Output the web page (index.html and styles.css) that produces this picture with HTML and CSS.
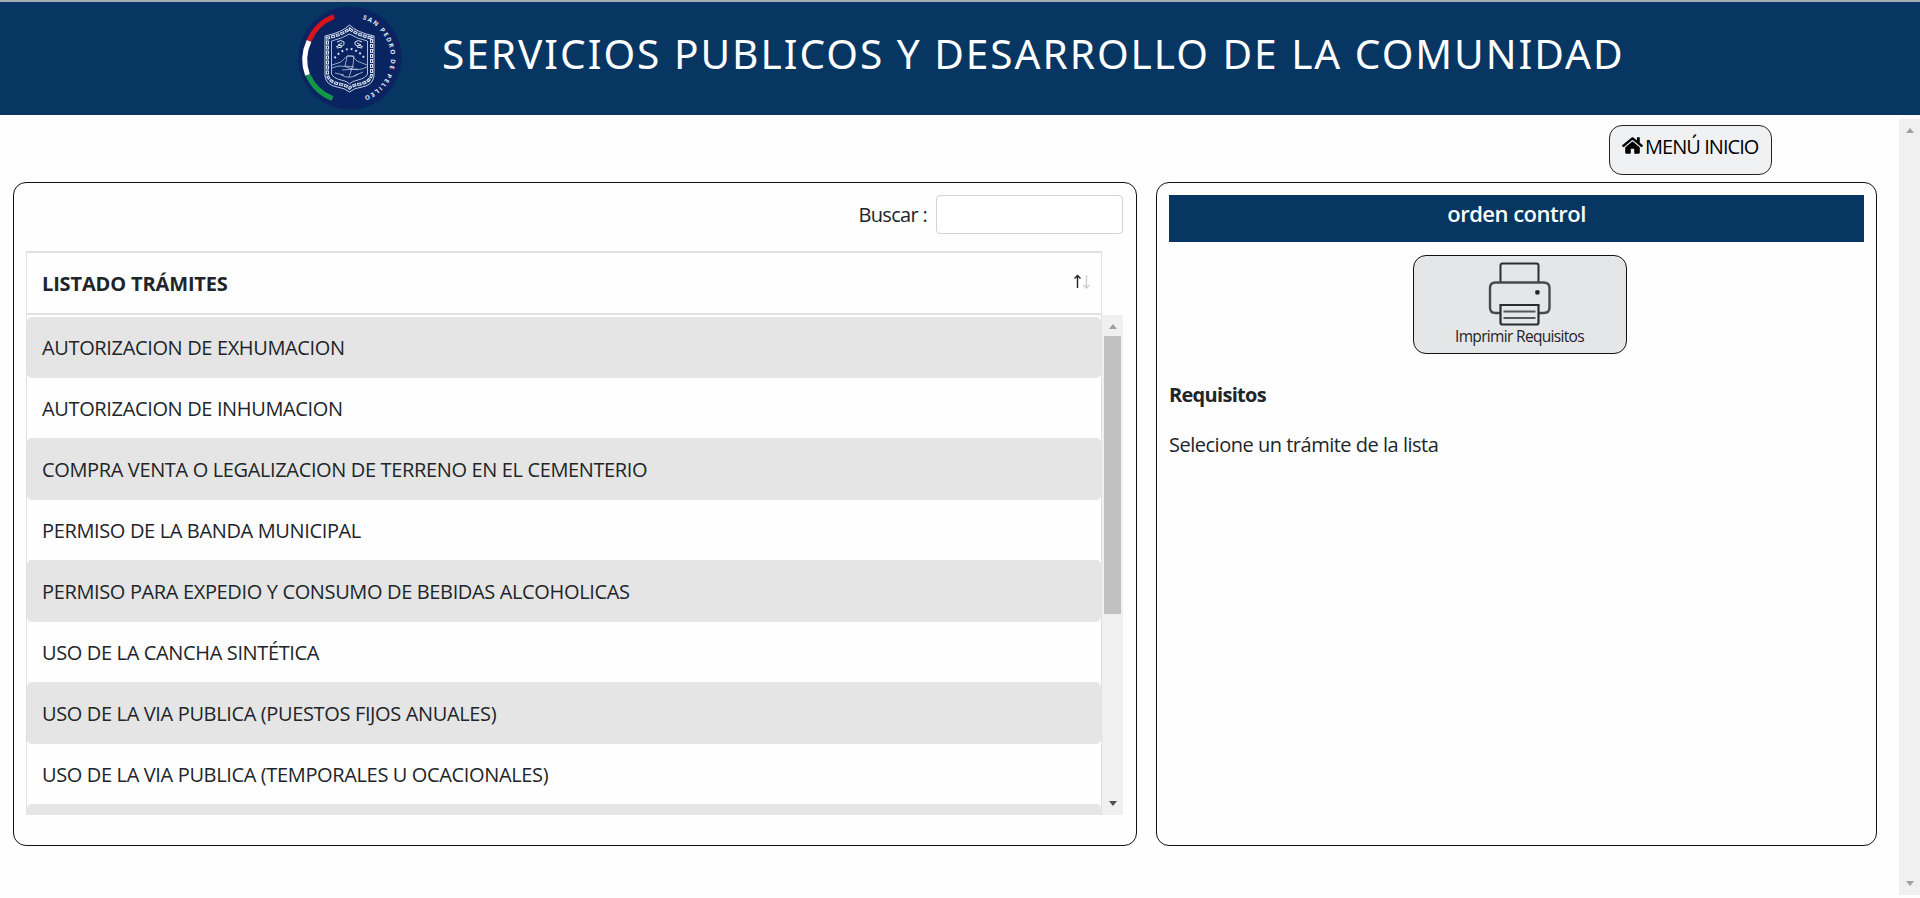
FILE: index.html
```html
<!DOCTYPE html>
<html lang="es">
<head>
<meta charset="utf-8">
<title>Servicios Publicos y Desarrollo de la Comunidad</title>
<link rel="stylesheet" href="styles.css">
</head>
<body>
<header class="header">
  <svg class="logo" viewBox="0 0 104 104">
    <defs><path id="ring" d="M64.6 13A41 41 0 0 1 64.6 91"/></defs>
    <circle cx="52" cy="52" r="51.5" fill="#0a2461"/>
    <g fill="none" stroke-width="5">
      <path d="M36 10.5A44.5 44.5 0 0 0 11 35" stroke="#d8131b"/>
      <path d="M11 35A44.5 44.5 0 0 0 9.500 69" stroke="#fff"/>
      <path d="M10 69A44.500 44.500 0 0 0 34.500 92.500" stroke="#119748"/>
    </g>
    <text class="ring-text"><textPath href="#ring" textLength="101">SAN PEDRO DE PELILEO</textPath></text>
    <g fill="none" stroke="#d9e3f2">
      <path d="M51.500 19Q59 26.500 76 30V70Q75 79 64 81Q56 82 51.500 86Q47 82 39 81Q28 79 27 70V30Q44 26.500 51.500 19Z" stroke-width=".9"/>
      <path d="M51.500 23Q60 29 73.500 32V69Q72 76 62 78Q55 79 51.500 82Q48 79 41 78Q31 76 29.500 69V32Q43 29 51.500 23Z" stroke-width="3" stroke-dasharray="4 1"/>
      <path d="M51.500 23Q60 29 73.500 32V69Q72 76 62 78Q55 79 51.500 82Q48 79 41 78Q31 76 29.500 69V32Q43 29 51.500 23Z" stroke="#0a2461" stroke-width="1" stroke-dasharray="2 3" stroke-dashoffset="-1"/>
      <path d="M51.500 28Q59 32.500 69.500 35V68Q68 72 60 74Q54 75 51.500 78Q49 75 43 74Q35 72 33.500 68V35Q44 32.500 51.500 28Z" stroke-width=".8"/>
      <path d="M39 36q4-3 7 0q1 3-2 4l-4-1 4-2M64 36q-4-3-7 0q-1 3 2 4l4-1-4-2M38 41l4-2 2 2-5 1M65 41l-4-2-2 2 5 1" stroke-width="1"/>
      <path d="M36.500 52Q51.500 34 66.500 52" stroke-width="2" stroke-dasharray="1.800 3"/>
      <path d="M34 59l9-3 6-6h5l5 5 10 4M34 62q9-4 17 0t18-1M49 50h7l-1 9-4 12M44 64l16-1M43 69q9 5 17-1M49 51l-2 9 9 1M37 67l9 2M56 70l9-4" stroke-width=".8" opacity=".85"/>
    </g>
  </svg>
  <h1 class="title">SERVICIOS PUBLICOS Y DESARROLLO DE LA COMUNIDAD</h1>
</header>
<div class="viewport">
  <main class="content">
    <nav class="toolbar">
      <a class="home-button">
        <svg class="home-icon" viewBox="0 0 576 512"><path d="M488 312.700V456c0 13.300-10.700 24-24 24H348c-6.600 0-12-5.400-12-12V356c0-6.600-5.400-12-12-12h-72c-6.600 0-12 5.400-12 12v112c0 6.600-5.400 12-12 12H112c-13.300 0-24-10.700-24-24V312.700c0-3.600 1.600-7 4.400-9.300l188-154.800c4.400-3.600 10.800-3.600 15.300 0l188 154.800c2.700 2.300 4.300 5.700 4.300 9.300zm83.600-60.900L488 182.900V44.400c0-6.600-5.400-12-12-12h-56c-6.600 0-12 5.400-12 12V117l-89.500-73.700c-17.700-14.600-43.300-14.600-61 0L4.400 251.800c-5.100 4.200-5.800 11.800-1.600 16.900l25.500 31c4.200 5.100 11.800 5.800 16.900 1.600l235.200-193.700c4.400-3.600 10.800-3.600 15.300 0l235.200 193.700c5.100 4.200 12.700 3.500 16.900-1.600l25.500-31c4.200-5.200 3.400-12.700-1.700-16.900z"/></svg>
        <span class="home-label">MENÚ INICIO</span>
      </a>
    </nav>
    <div class="columns">
      <section class="card list-card">
        <div class="search">
          <label class="search-label" for="q">Buscar :</label>
          <input class="search-input" id="q" type="text">
        </div>
        <div class="table-head">
          <span class="table-title">LISTADO TRÁMITES</span>
          <svg class="sort" viewBox="0 0 18 16" fill="none"><path d="M4.500 14V2M1.500 4.500l3-3 3 3" stroke="#222" stroke-width="1.400"/><path d="M13.500 1v12M10.500 11l3 3 3-3" stroke="#ccc" stroke-width="1.300"/></svg>
        </div>
        <div class="table-scroll">
          <ul class="rows">
            <li class="row">AUTORIZACION DE EXHUMACION</li>
            <li class="row">AUTORIZACION DE INHUMACION</li>
            <li class="row">COMPRA VENTA O LEGALIZACION DE TERRENO EN EL CEMENTERIO</li>
            <li class="row">PERMISO DE LA BANDA MUNICIPAL</li>
            <li class="row">PERMISO PARA EXPEDIO Y CONSUMO DE BEBIDAS ALCOHOLICAS</li>
            <li class="row">USO DE LA CANCHA SINTÉTICA</li>
            <li class="row">USO DE LA VIA PUBLICA (PUESTOS FIJOS ANUALES)</li>
            <li class="row">USO DE LA VIA PUBLICA (TEMPORALES U OCACIONALES)</li>
            <li class="row"></li>
          </ul>
          <div class="bar">
            <i class="arrow up"></i>
            <i class="thumb"></i>
            <i class="arrow down dark"></i>
          </div>
        </div>
      </section>
      <section class="card detail-card">
        <h2 class="detail-title">orden control</h2>
        <button class="print-button">
          <svg class="printer" viewBox="0 0 64 64" fill="none" stroke="#2b2c2e" stroke-width="2">
            <path d="M12.500 20V3.500q0-2 2-2h34q2 0 2 2V20"/>
            <path d="M12.500 51H7.500Q2 51 2 45.500V26Q2 20.500 7.500 20.500h48Q61.500 20.500 61.500 26v19.500q0 5.500-6 5.500H50.500" stroke="#48494b" stroke-width="2.400"/>
            <path d="M12.500 43h38v17.500q0 2-2 2h-34q-2 0-2-2Z" stroke-width="2.200"/>
            <path d="M15.500 49.500h32M15.500 56h32" stroke="#55575a" stroke-width="2.200"/>
            <rect x="47.300" y="28.300" width="4.200" height="4.200" rx="1" fill="#222" stroke="none"/>
          </svg>
          <span class="print-label">Imprimir Requisitos</span>
        </button>
        <h3 class="req-title">Requisitos</h3>
        <p class="req-text">Selecione un trámite de la lista</p>
      </section>
    </div>
  </main>
  <div class="bar page-bar">
    <i class="arrow up"></i>
    <i class="arrow down"></i>
  </div>
</div>
</body>
</html>
```

FILE: styles.css
```css
* { box-sizing: border-box; }
body {
  margin: 0;
  height: 898px;
  overflow: hidden;
  background: #fefefe;
  color: #212529;
  font: 20px/30px "Open Sans", "Noto Sans", sans-serif;
}
h1, h2, h3, p, ul { margin: 0; padding: 0; }

.header {
  display: flex;
  height: 115px;
  padding: 4px 0 0 298px;
  border-top: 2px solid #a5abb3;
  background: #073663;
}
.logo { width: 104px; height: 104px; flex: none; overflow: visible; }
.ring-text { fill: #e8eef8; font: 700 6.200px "Open Sans", sans-serif; }
.title {
  margin: 21px 0 0 40px;
  color: #fff;
  font: 400 40.600px/54px "Noto Sans", "DejaVu Sans", sans-serif;
  letter-spacing: 1.980px;
  white-space: nowrap;
}

.viewport { display: flex; height: 780px; }
.content { width: 1899px; padding: 10px 22px 0 13px; }
.toolbar { display: flex; justify-content: flex-end; height: 57px; padding-right: 105px; }
.home-button {
  display: flex;
  width: 163px;
  height: 50px;
  padding: 6px 0 0 12px;
  border: 1px solid #222;
  border-radius: 13px;
  background: #f0f1f3;
  color: #000;
}
.home-icon { flex: none; width: 21px; height: 19px; margin: 4px 2px 0 0; }
.home-label { letter-spacing: -0.950px; white-space: nowrap; }

.columns { display: flex; gap: 19px; }
.card { height: 664px; padding: 12px; border: 1px solid #111; border-radius: 13px; }
.list-card { width: 1124px; }
.detail-card { display: flex; flex-direction: column; width: 721px; }

.search { display: flex; justify-content: flex-end; align-items: center; height: 39px; padding-right: 1px; gap: 9px; }
.search-label { letter-spacing: -0.700px; }
.search-input { width: 187px; height: 39px; border: 1px solid #ced4da; border-radius: 4px; background: #fff; }

.table-head {
  display: flex;
  justify-content: space-between;
  width: 1076px;
  height: 64px;
  margin-top: 17px;
  padding: 16px 10px 0 15px;
  border: solid #dee2e6;
  border-width: 2px 1px;
}
.table-title { font-weight: 700; letter-spacing: -0.150px; }
.sort { width: 18px; height: 16px; margin-top: 5px; }

.table-scroll { display: flex; height: 500px; overflow: hidden; }
.rows {
  width: 1076px;
  padding-top: 1px;
  border: solid #dee2e6;
  border-width: 0 1px;
  list-style: none;
}
.row { height: 60px; padding: 16px 0 0 15px; letter-spacing: -0.360px; white-space: nowrap; }
.row:nth-child(odd) { height: 62px; padding-top: 17px; border-radius: 5px; background: #e5e5e5; }
.row:first-child { height: 61px; margin-top: 1px; padding-top: 16px; }

.bar { display: flex; flex-direction: column; align-items: center; width: 21px; padding: 9px 0 9px; background: #f0f0f0; }
.page-bar { height: 776px; margin-top: 4px; }
.arrow { border: solid transparent; border-width: 0 4px; }
.up { border-bottom: 5px solid #a0a0a0; }
.down { margin-top: auto; border-top: 5px solid #a0a0a0; }
.dark { border-top-color: #505050; }
.thumb { width: 17px; height: 278px; margin-top: 7px; background: #c1c1c1; }

.detail-title {
  height: 47px;
  padding-top: 2px;
  background: #073663;
  color: #fff;
  font-size: 22px;
  font-weight: 600;
  line-height: 32px;
  letter-spacing: -0.500px;
  text-align: center;
}
.print-button {
  display: flex;
  flex-direction: column;
  align-items: center;
  align-self: center;
  width: 214px;
  height: 99px;
  margin: 13px 0 0 6px;
  padding: 6px 0 0;
  border: 1px solid #111;
  border-radius: 13px;
  background: #e5e6e8;
}
.printer { width: 64px; height: 64px; }
.print-label { margin-top: -1px; color: #212529; font: 15.500px/22px "Open Sans", sans-serif; letter-spacing: -0.670px; }
.req-title { margin-top: 26px; font-size: 20px; font-weight: 700; letter-spacing: -0.700px; }
.req-text { margin-top: 20px; letter-spacing: -0.490px; }
```
